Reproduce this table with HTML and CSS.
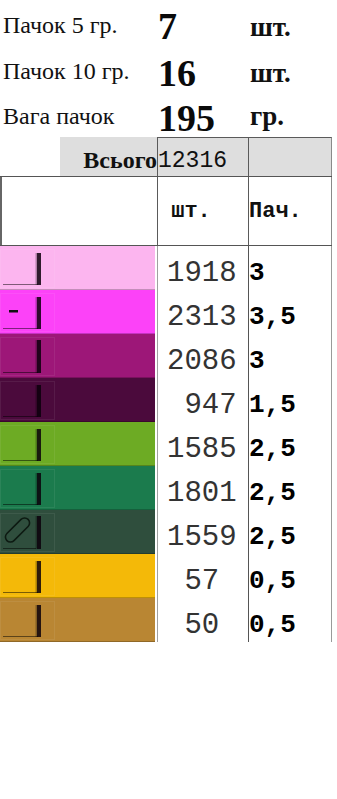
FILE: index.html
```
<!DOCTYPE html>
<html lang="uk">
<head>
<meta charset="utf-8">
<title>Пачки</title>
<link rel="stylesheet" href="styles.css">
</head>
<body>
<div class="sheet">
  <div class="row top r1">
    <div class="label">Пачок 5 гр.</div>
    <div class="value">7</div>
    <div class="unit">шт.</div>
  </div>
  <div class="row top r2">
    <div class="label">Пачок 10 гр.</div>
    <div class="value">16</div>
    <div class="unit">шт.</div>
  </div>
  <div class="row top r3">
    <div class="label">Вага пачок</div>
    <div class="value">195</div>
    <div class="unit">гр.</div>
  </div>

  <div class="row total">
    <div class="total-label"><span>Всього</span></div>
    <div class="total-value">12316</div>
    <div class="total-empty"></div>
  </div>

  <div class="row head">
    <div class="head-blank"></div>
    <div class="head-qty"> шт.</div>
    <div class="head-packs">Пач.</div>
  </div>

  <div class="row data">
    <div class="swatch pink"><svg class="icon" viewBox="0 0 56 44" width="56" height="44"><rect class="frame" x="0.5" y="3.5" width="54" height="38"/><line class="base" x1="3" y1="38.5" x2="38" y2="38.5"/><rect class="bar-shade" x="35.5" y="7" width="1.5" height="32"/><rect class="bar" x="37" y="7" width="4" height="32"/></svg></div>
    <div class="qty">1918</div>
    <div class="packs">3</div>
  </div>
  <div class="row data">
    <div class="swatch magenta"><svg class="icon" viewBox="0 0 56 44" width="56" height="44"><rect class="frame" x="0.5" y="3.5" width="54" height="38"/><line class="base" x1="3" y1="38.5" x2="38" y2="38.5"/><rect class="dash" x="9" y="20" width="9" height="2.5"/><rect class="bar-shade" x="35.5" y="7" width="1.5" height="32"/><rect class="bar" x="37" y="7" width="4" height="32"/></svg></div>
    <div class="qty">2313</div>
    <div class="packs">3,5</div>
  </div>
  <div class="row data">
    <div class="swatch purple"><svg class="icon" viewBox="0 0 56 44" width="56" height="44"><rect class="frame" x="0.5" y="3.5" width="54" height="38"/><line class="base" x1="3" y1="38.5" x2="38" y2="38.5"/><rect class="bar-shade" x="35.5" y="6" width="1.5" height="33"/><rect class="bar" x="37" y="6" width="4" height="33"/></svg></div>
    <div class="qty">2086</div>
    <div class="packs">3</div>
  </div>
  <div class="row data">
    <div class="swatch plum"><svg class="icon" viewBox="0 0 56 44" width="56" height="44"><rect class="frame" x="0.5" y="3.5" width="54" height="38"/><line class="base" x1="3" y1="38.5" x2="38" y2="38.5"/><rect class="bar-shade" x="35.5" y="7" width="1.5" height="32"/><rect class="bar" x="37" y="7" width="4" height="32"/></svg></div>
    <div class="qty"> 947</div>
    <div class="packs">1,5</div>
  </div>
  <div class="row data">
    <div class="swatch lime"><svg class="icon" viewBox="0 0 56 44" width="56" height="44"><rect class="frame" x="0.5" y="3.5" width="54" height="38"/><line class="base" x1="3" y1="38.5" x2="38" y2="38.5"/><rect class="bar-shade" x="35.5" y="7" width="1.5" height="32"/><rect class="bar" x="37" y="7" width="4" height="32"/></svg></div>
    <div class="qty">1585</div>
    <div class="packs">2,5</div>
  </div>
  <div class="row data">
    <div class="swatch green"><svg class="icon" viewBox="0 0 56 44" width="56" height="44"><rect class="frame" x="0.5" y="3.5" width="54" height="38"/><line class="base" x1="3" y1="38.5" x2="38" y2="38.5"/><rect class="bar-shade" x="35.5" y="7" width="1.5" height="32"/><rect class="bar" x="37" y="7" width="4" height="32"/></svg></div>
    <div class="qty">1801</div>
    <div class="packs">2,5</div>
  </div>
  <div class="row data">
    <div class="swatch slate"><svg class="icon" viewBox="0 0 56 44" width="56" height="44"><rect class="frame" x="0.5" y="3.5" width="54" height="38"/><line class="base" x1="3" y1="38.5" x2="36" y2="38.5"/><rect class="pill" x="-15" y="-5" width="30" height="10" rx="5" transform="translate(17.5 20) rotate(-45)"/><rect class="bar-shade" x="35.5" y="6" width="1.5" height="33"/><rect class="bar" x="37" y="6" width="4" height="33"/></svg></div>
    <div class="qty">1559</div>
    <div class="packs">2,5</div>
  </div>
  <div class="row data">
    <div class="swatch yellow"><svg class="icon" viewBox="0 0 56 44" width="56" height="44"><rect class="frame" x="0.5" y="3.5" width="54" height="38"/><line class="base" x1="3" y1="38.5" x2="38" y2="38.5"/><rect class="bar-shade" x="35.5" y="7" width="1.5" height="32"/><rect class="bar" x="37" y="7" width="4" height="32"/></svg></div>
    <div class="qty"> 57</div>
    <div class="packs">0,5</div>
  </div>
  <div class="row data">
    <div class="swatch brown"><svg class="icon" viewBox="0 0 56 44" width="56" height="44"><rect class="frame" x="0.5" y="3.5" width="54" height="38"/><line class="base" x1="3" y1="38.5" x2="38" y2="38.5"/><rect class="bar-shade" x="35.5" y="7" width="1.5" height="32"/><rect class="bar" x="37" y="7" width="4" height="32"/></svg></div>
    <div class="qty"> 50</div>
    <div class="packs">0,5</div>
  </div>
</div>
</body>
</html>
```
FILE: styles.css
```
* { box-sizing: border-box; }

html, body {
  margin: 0;
  padding: 0;
  background: #ffffff;
}

.sheet {
  width: 337px;
}

.row {
  display: grid;
  grid-template-columns: 157px 91px 84px;
}

/* ---- top summary rows ---- */
.top { height: 46px; }
.top.r2 { height: 45px; }

.label {
  font-family: "Liberation Serif", "Times New Roman", serif;
  font-size: 24px;
  line-height: 1;
  color: #111;
  padding: 13px 0 0 3px;
  white-space: nowrap;
}
.value {
  font-family: "Liberation Serif", "Times New Roman", serif;
  font-weight: bold;
  font-size: 38px;
  line-height: 1;
  color: #0a0a0a;
  padding: 7px 0 0 1px;
}
.r2 .value, .r3 .value { padding-top: 8px; }
.unit {
  font-family: "Liberation Serif", "Times New Roman", serif;
  font-weight: bold;
  font-size: 27px;
  line-height: 1;
  color: #111;
  padding: 14px 0 0 2px;
}
.r3 .unit { padding-top: 12px; }

/* ---- total row ---- */
.total { height: 39px; }
.total-label {
  margin-left: 60px;
  background: #dedede;
  text-align: right;
  font-family: "Liberation Serif", "Times New Roman", serif;
  font-weight: bold;
  font-size: 24px;
  line-height: 1;
  color: #111;
  padding-top: 11px;
}
.total-value,
.total-empty {
  background: #dedede;
  border-top: 1px solid #5a5a5a;
  border-left: 1px solid #5a5a5a;
}
.total-value {
  font-family: "Liberation Mono", "Courier New", monospace;
  font-size: 23px;
  line-height: 1;
  color: #111;
  padding-top: 12px;
}
.total-empty {
  border-right: 1px solid #8a8a8a;
}

/* ---- header row ---- */
.head {
  height: 70px;
  border-top: 1px solid #555;
  border-bottom: 1px solid #555;
  width: 332px;
}
.head-blank {
  border-left: 2px solid #666;
}
.head-qty,
.head-packs {
  font-family: "Liberation Mono", "Courier New", monospace;
  font-weight: bold;
  font-size: 22px;
  line-height: 1;
  color: #111;
  padding-top: 24px;
  white-space: pre;
  border-left: 1px solid #5a5a5a;
}
.head-packs {
  border-right: 1px solid #8a8a8a;
}

/* ---- data rows ---- */
.data { height: 44px; }

.swatch {
  width: 155px;
  height: 44px;
  border-bottom: 1px solid rgba(0, 0, 0, 0.22);
  overflow: hidden;
}
.icon { display: block; }

.icon .frame {
  fill: none;
  stroke: rgba(255, 255, 255, 0.07);
  stroke-width: 1;
}
.icon .base {
  stroke: rgba(0, 0, 0, 0.5);
  stroke-width: 1;
}
.icon .bar { fill: rgba(10, 0, 10, 0.85); }
.icon .bar-shade { fill: rgba(0, 0, 0, 0.3); }
.icon .dash { fill: #111; }
.icon .pill {
  fill: none;
  stroke: #0d1a12;
  stroke-width: 1.6;
}

.pink    { background: #fcb5ef; }
.magenta { background: #fc42f8; }
.purple  { background: #9d1778; }
.plum    { background: #4b0a3c; }
.lime    { background: #6dab24; }
.green   { background: #1b7b4d; }
.slate   { background: #2f4e3d; }
.yellow  { background: #f4b908; }
.brown   { background: #b98633; }

.qty {
  border-left: 1px solid #a0a0a0;
  font-family: "Liberation Mono", "Courier New", monospace;
  font-size: 29px;
  line-height: 1;
  color: #333;
  padding: 13px 0 0 9px;
  white-space: pre;
}
.packs {
  border-left: 1px solid #555;
  border-right: 1px solid #9a9a9a;
  font-family: "Liberation Mono", "Courier New", monospace;
  font-weight: bold;
  font-size: 26px;
  line-height: 1;
  color: #000;
  padding: 14px 0 0 0;
}
```
